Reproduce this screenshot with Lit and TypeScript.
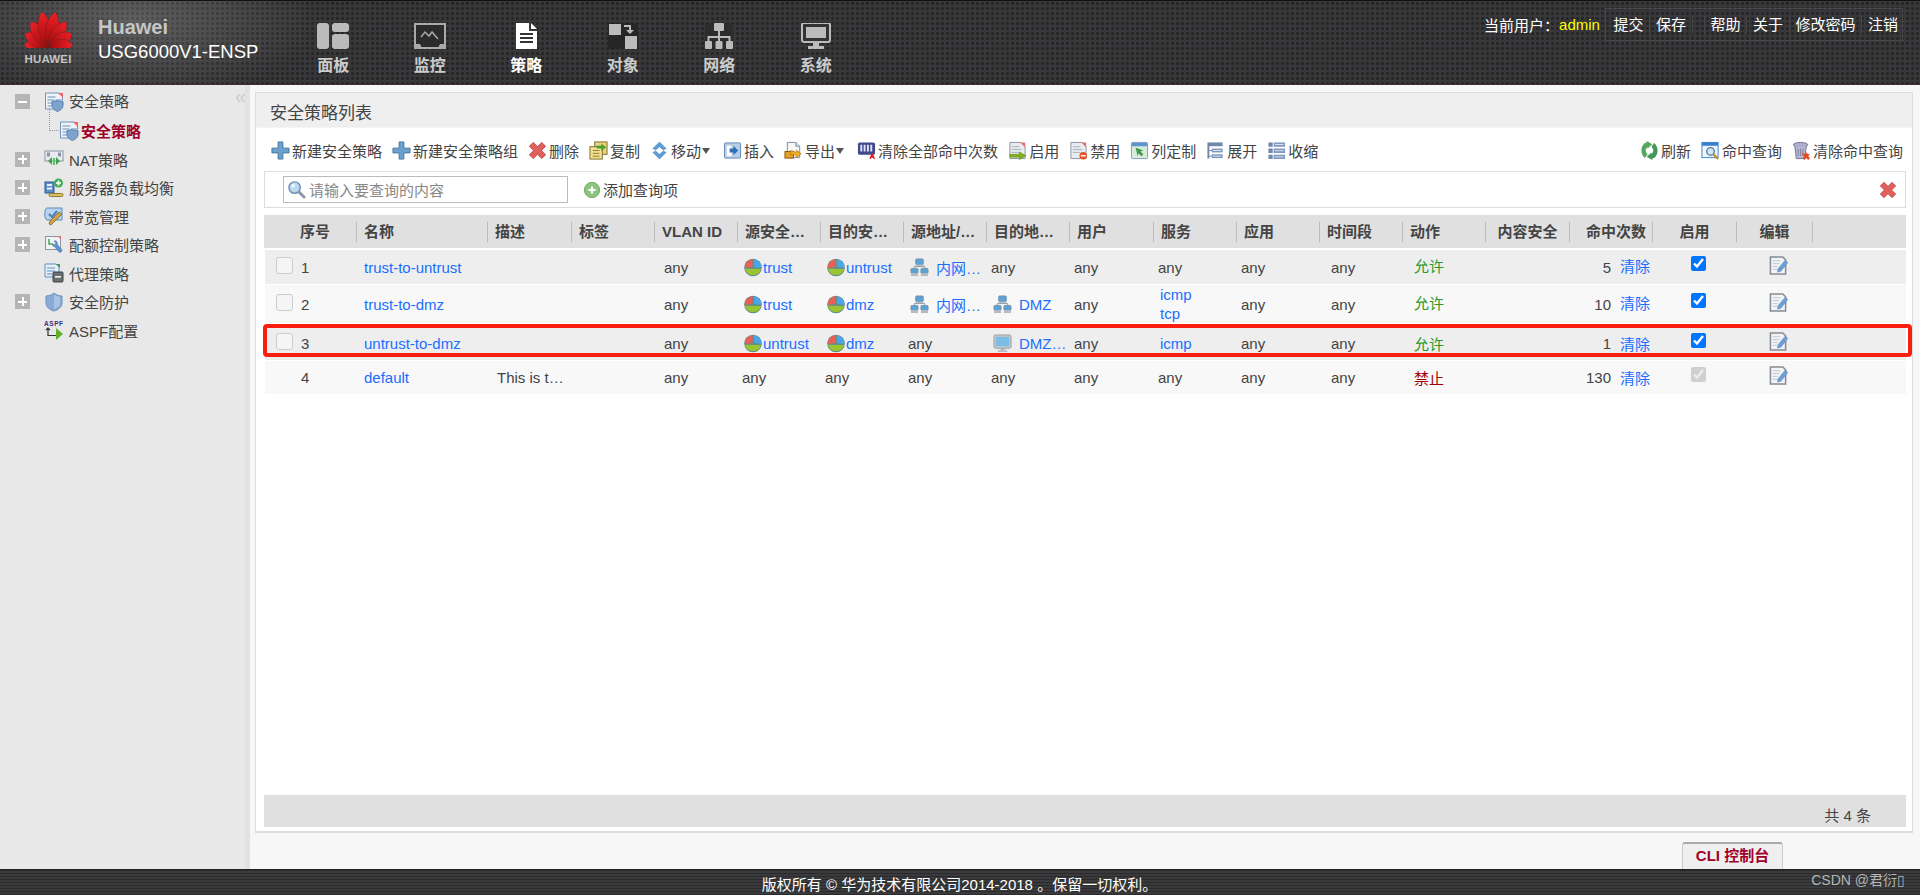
import { LitElement, html, css, svg, TemplateResult } from "lit";
import { customElement } from "lit/decorators.js";

const ic = (body: unknown, cls = "ic") => html`<svg class=${cls} viewBox="0 0 20 20">${body}</svg>`;

const plus = ic(svg`<path d="M7.500 1h5v6.500H19v5h-6.500V19h-5v-6.500H1v-5h6.500z" fill="#6ba0cf" stroke="#45769f"/>`);
const redX = ic(svg`<path d="M1.500 5.500l4-4L10 6l4.500-4.500 4 4L14 10l4.500 4.500-4 4L10 14l-4.500 4.500-4-4L6 10z" fill="#e2605c" stroke="#c04a48"/>`);
const copy = ic(svg`<rect x="6" y="1" width="13" height="13" fill="#e9d27a" stroke="#7b6a2a"/><rect x="1" y="6" width="13" height="13" fill="#f3e08f" stroke="#7b6a2a"/><path d="M4 10h7M4 13h7M4 16h7" stroke="#8a7a3a"/><path d="M8 5h5V2.500l5 4-5 4V8H8z" fill="#49a030"/>`);
const move = ic(svg`<path d="M10 1l7 7-3 1.500-4-3.500-4 3.500L3 8z" fill="#5d9bd6" stroke="#4a86c0" stroke-width=".5"/><path d="M10 19l7-7-3-1.500-4 3.500-4-3.500L3 12z" fill="#5d9bd6" stroke="#4a86c0" stroke-width=".5"/>`);
const insert = ic(svg`<rect x="1.500" y="2" width="17" height="16" rx="1" fill="#b8cde6" stroke="#5f86b8"/><rect x="4" y="5" width="5" height="11" fill="#fff"/><path d="M7 8h4V5l5 5-5 5v-3H7z" fill="#2f6fb5"/>`);
const exportI = ic(svg`<path d="M3.500 1.500h9l4 4v12h-13z" fill="#f7f7f7" stroke="#7a88a8"/><path d="M12.500 1.500v4h4" fill="#dde" stroke="#7a88a8"/><rect x="1" y="11" width="9" height="7" fill="#e8a020" stroke="#8a5a10"/><path d="M7 10l6 2v-2.500l5 4-5 4V15l-6-1z" fill="#f0b020" stroke="#a06c10" stroke-width=".6"/>`);
const clearAll = ic(svg`<rect x="1" y="1.500" width="18" height="13" rx="2" fill="#3f4a8a"/><path d="M4.500 4v7M8 4v7M11.500 4v7M15 4v7" stroke="#dfe3f5" stroke-width="2"/><path d="M13 19l2.500-6h1l2.500 6h-1.500l-.5-1.500h-2l-.5 1.500z" fill="#e01818"/>`);
const doc = svg`<path d="M2 1.500h12l4 4v13H2z" fill="#e8ecf0" stroke="#8892a0"/><path d="M13 1.500l5 5v-5z" fill="#e66"/><path d="M4 6h8M4 9h10M4 12h8" stroke="#a8b0b8"/>`;
const enable = ic(svg`${doc}<path d="M2 14h10v-2.500l7 4-7 4V17H2z" fill="#82b020" stroke="#5a8010" stroke-width=".5"/>`);
const disable = ic(svg`${doc}<circle cx="15" cy="15.500" r="4" fill="#e8502a"/><rect x="12.500" y="14.700" width="5" height="1.600" fill="#fff"/>`);
const cols = ic(svg`<rect x="1.500" y="1.500" width="17" height="17" rx="1" fill="#d8ead8" stroke="#7f9cc0"/><rect x="2" y="2" width="16" height="3.500" fill="#5f93d0"/><path d="M6 7l8 3-3 1 3 3-2 2-3-3-1 3z" fill="#3a9a4a"/>`);
const expand = ic(svg`<rect x="1.500" y="1.500" width="16" height="4" fill="#6f86ad"/><path d="M2.500 5v13.500" stroke="#6f86ad" stroke-width="2"/><path d="M3 10h3M3 16h3" stroke="#6f86ad"/><rect x="6" y="8" width="11.500" height="4" fill="#7f96bd"/><rect x="6" y="14" width="11.500" height="4" fill="#7f96bd"/><path d="M7.500 10h8.500M7.500 16h8.500" stroke="#dde4f0"/>`);
const collapse = ic(svg`<path d="M1.500 1.500h4.500v4.500H1.500zM1.500 8h4.500v4.500H1.500zM1.500 14.500h4.500V19H1.500z" fill="#6f86ad"/><path d="M7 1.500h12v4.500H7zM7 8h12v4.500H7zM7 14.500h12V19H7z" fill="#8298bf"/><path d="M8.500 3.700h9M8.500 10.200h9M8.500 16.700h9" stroke="#dde4f0"/>`);
const refresh = ic(svg`<path d="M9.500 1C4 1 1.500 5.500 1.500 10c0 3.500 1.500 6 3.500 8l3-4c-1-1-2-2.500-2-4 0-2 1.500-4 3.500-4z" fill="#55a85f"/><path d="M7 0l6 3.500L8 8z" fill="#55a85f"/><path d="M10.500 19c5.500 0 8-4.500 8-9 0-3.500-1.500-6-3.500-8l-3 4c1 1 2 2.500 2 4 0 2-1.500 4-3.500 4z" fill="#46985a"/><path d="M13 20l-6-3.500 5-4.500z" fill="#46985a"/>`);
const hitQ = ic(svg`<rect x="1" y="1.500" width="17" height="16" fill="#eef5fb" stroke="#3a7fd0"/><rect x="1" y="1.500" width="17" height="3.500" fill="#3a7fd0"/><circle cx="10" cy="11" r="4" fill="#cfe6f7" stroke="#5a7a98" stroke-width="1.400"/><path d="M13 14l5 5" stroke="#c08a20" stroke-width="2.200"/>`);
const trash = ic(svg`<ellipse cx="9" cy="4" rx="7.500" ry="2.500" fill="#aeb0d0" stroke="#70708f"/><path d="M3 5.500l1.500 13h9L15 5.500" fill="#b8b9d2" stroke="#70708f"/><path d="M6.500 8v8M9 8v8M11.500 8v8" stroke="#7f7f9f"/><path d="M11 12l2 2 2-2 2 2 2-.2-2 2.200 2 2-2 2-2-2-2 2-2-2 2-2-2-2z" fill="#e8481e"/>`);
const search = ic(svg`<circle cx="8" cy="8" r="6" fill="#bcd9f2" stroke="#6a8fb5" stroke-width="1.500"/><circle cx="6.500" cy="6" r="2" fill="#eef7ff"/><path d="M12.500 12.500l5.500 5.500" stroke="#8a97a8" stroke-width="3" stroke-linecap="round"/>`);
const addI = ic(svg`<circle cx="10" cy="10" r="8.500" fill="#8cc47e" stroke="#6fa860"/><path d="M6 10h8M10 6v8" stroke="#fff" stroke-width="2.400"/>`);
const pie = ic(svg`<circle cx="9.500" cy="10" r="9.300" fill="#5f8f8a"/><path d="M9 9.500V1.200A8.800 8.800 0 0 0 .800 10.500z" fill="#ea5f58"/><path d="M10.500 9.500V1.200A8.800 8.800 0 0 1 18.300 10.500z" fill="#4aa6e6"/><path d="M1 11.200L18 11.500A8.800 8.800 0 0 1 1 11.200z" fill="#9ac530"/>`);
const addr = ic(svg`<rect x="6" y="1" width="8" height="6" rx="1" fill="#5aa3d8" stroke="#7d93a8"/><rect x="1" y="11" width="7.500" height="5" rx="1" fill="#5aa3d8" stroke="#7d93a8"/><rect x="11.500" y="11" width="7.500" height="5" rx="1" fill="#5aa3d8" stroke="#7d93a8"/><path d="M10 7v2M4.500 11V9h11v2" stroke="#8a9aa8" fill="none"/><rect x="1" y="16" width="7.500" height="3" fill="#b5bcc4"/><rect x="11.500" y="16" width="7.500" height="3" fill="#b5bcc4"/><rect x="6" y="7" width="8" height="1.500" fill="#b5bcc4"/>`);
const mon = ic(svg`<rect x="1" y="1" width="18" height="14" rx="1.500" fill="#c4c8cc" stroke="#9aa0a6"/><rect x="3" y="3" width="14" height="10" fill="#7cbde6"/><rect x="8" y="15" width="4" height="2" fill="#aab0b6"/><rect x="5" y="17" width="10" height="2" fill="#b8bec4"/>`);
const edit = ic(svg`<path d="M1.500 1h13l3 3v15h-16z" fill="#f2f3f4" stroke="#868c94" stroke-width="1.600"/><path d="M4 5h8M4 8h7M4 11h5M4 14h5" stroke="#c2c6ca"/><path d="M9.500 13.500L17 4.500l2.800 2.300L12.500 16l-3.500 1z" fill="#6f9fd8" stroke="#4f7fb8" stroke-width=".5"/>`);

const shieldDoc = svg`<path d="M1.500 1h14l3 3v4H12v9H1.500z" fill="#eef2f6" stroke="#6f92bd"/><path d="M14 1l5 5V1z" fill="#e66"/><path d="M3.500 5h8M3.500 8h7M3.500 11h6M3.500 14h6" stroke="#6f92bd"/><path d="M8 9.500c3 0 5-1 5-1s2 1 6 1v4c0 3-3 5-5.500 6C11 18.500 8 16.500 8 13.500z" fill="#7fa2cf" stroke="#5a7fae"/>`;
const tree: Record<string, TemplateResult> = {
  policy: ic(shieldDoc),
  nat: ic(svg`<rect x="1" y="2" width="18" height="10" fill="#e8ebef" stroke="#8a95a3"/><rect x="3" y="3.500" width="3" height="4" fill="#8a95a3"/><rect x="14" y="3.500" width="3" height="4" fill="#8a95a3"/><path d="M8 8l-4 4 4 4zM12 8l4 4-4 4z" fill="#3fa24f"/><path d="M9 9h2v7H9z" fill="#5fbf6a"/>`),
  server: ic(svg`<rect x="1" y="4" width="9" height="11" fill="#5a8fc8" stroke="#33598a"/><rect x="3" y="6" width="5" height="2" fill="#e8f0f8"/><rect x="3" y="9.500" width="5" height="2" fill="#e8f0f8"/><circle cx="14.500" cy="5" r="4.500" fill="#43ad5a"/><path d="M12 5h5M14.500 2.500v5" stroke="#fff" stroke-width="1.600"/><rect x="5" y="15.500" width="14" height="3" rx="1.500" fill="#d9c16a" stroke="#8f7a2a"/>`),
  band: ic(svg`<path d="M3 2h15v12H3C0 14 0 2 3 2z" fill="#b7d3ee" stroke="#5c8bbd"/><path d="M5 8l3 3 5-6" stroke="#4a7fb5" stroke-width="2" fill="none"/><path d="M15 6l3 2-8 8-3 3-2-1 1-3z" fill="#d9a23a" stroke="#444" stroke-width=".6"/>`),
  quota: ic(svg`<rect x="1.500" y="1.500" width="15" height="13" fill="#f2f3f5" stroke="#8d95a0"/><path d="M14 1.500l3 3v-3z" fill="#e66"/><path d="M5 4v5h4" stroke="#4aa35a" stroke-width="1.500" fill="none"/><path d="M10 11l5 6a2 2 0 0 0 3-2l-5-6c1-2-1-4-3-3l2 2-1 2-2-1c-1 2 1 3 1 2z" fill="#5b93cc" stroke="#3d6ea3" stroke-width=".5"/>`),
  proxy: ic(svg`<path d="M1 1h11l3 3v10H1z" fill="#e8f0f6" stroke="#5b8fc0"/><path d="M12 1l4 4V1z" fill="#4a9a50"/><path d="M3 5h8M3 8h8M3 11h5" stroke="#5b8fc0"/><rect x="9" y="9" width="10" height="10" rx="1" fill="#6a6f74" stroke="#3f4347"/><rect x="11" y="13" width="6" height="1.600" fill="#f2f2f2"/>`),
  shield: ic(svg`<path d="M2 4c3 0 6-1 8-3 2 2 5 3 8 3v7c0 4-4 7-8 8-4-1-8-4-8-8z" fill="#8aabd6" stroke="#6a8fbf"/><path d="M10 3v14c3-1 6-3 6-6V5z" fill="#a9c3e5"/>`),
  aspf: ic(svg`<text x="0" y="6" font-size="6.500" font-weight="700" fill="#3d2f78" font-family="Liberation Sans" textLength="19">ASPF</text><path d="M4 7.500v8h8M2 10l2-2 2 2" stroke="#333" stroke-width="1.200" fill="none"/><path d="M12 8l7 6-7 6z" fill="#5fae2c"/>`),
};

const petals = [[-85, 25], [-60, 28], [-35, 32], [-11, 37], [11, 37], [35, 32], [60, 28], [85, 25]];
const logo = html`<svg class="logo" viewBox="-26 -38 52 39">
  <defs><linearGradient id="pet" x1="0" y1="0" x2="0" y2="1"><stop offset="0" stop-color="#f02028"/><stop offset="1" stop-color="#9c0a0c"/></linearGradient></defs>
  ${petals.map(([a, l]) => svg`<path transform="rotate(${a})" d="M0 0C-8.500 ${-l * 0.3} -9.500 ${-l * 0.72} 0 ${-l}C9.500 ${-l * 0.72} 8.500 ${-l * 0.3} 0 0z" fill="url(#pet)" stroke="#4a2a2a" stroke-width=".4"/>`)}
</svg>`;

const navIcons: TemplateResult[] = [
  html`<svg class="nav-ic" viewBox="0 0 34 26"><rect x="1" y="0" width="12" height="26" rx="3" fill="#bbb"/><rect x="16" y="0" width="17" height="9" rx="3" fill="#bbb"/><rect x="16" y="11" width="17" height="15" rx="3" fill="#bbb"/></svg>`,
  html`<svg class="nav-ic" viewBox="0 0 34 26"><rect x="2" y="1" width="30" height="24" fill="#2b2b2b" stroke="#aaa" stroke-width="2"/><path d="M8 14l4-5 4 4 3-4 6 7" stroke="#aaa" stroke-width="1.500" fill="none"/><path d="M3 25v-4h4l2 4zM31 25v-4h-4l-2 4z" fill="#aaa"/></svg>`,
  html`<svg class="nav-ic" viewBox="0 0 34 26"><path d="M7 0h13v8h8v18H7z" fill="#fff"/><path d="M22 0l6 6h-6z" fill="#fff"/><path d="M11 11h13M11 15h13M11 19h13" stroke="#333" stroke-width="2"/></svg>`,
  html`<svg class="nav-ic" viewBox="0 0 34 26"><rect x="2" y="0" width="30" height="26" fill="#262626"/><rect x="3" y="1" width="12" height="11" fill="#bbb"/><rect x="19" y="13" width="12" height="13" fill="#bbb"/><path d="M18 2h7v5h3l-4 4-4-4h3V4h-5z" fill="#bbb"/></svg>`,
  html`<svg class="nav-ic" viewBox="0 0 34 26"><rect x="3" y="0" width="28" height="26" fill="#2c2c2c"/><rect x="12" y="0" width="10" height="8" rx="1" fill="#bbb"/><path d="M17 8v6M6.500 18v-4h21v4M17 14v4" stroke="#bbb" stroke-width="2" fill="none"/><rect x="3" y="18" width="7" height="8" rx="1" fill="#bbb"/><rect x="13.500" y="18" width="7" height="8" rx="1" fill="#bbb"/><rect x="24" y="18" width="7" height="8" rx="1" fill="#bbb"/></svg>`,
  html`<svg class="nav-ic" viewBox="0 0 34 26"><rect x="3" y="0" width="28" height="19" rx="2" fill="#333" stroke="#bbb" stroke-width="2"/><rect x="7" y="4" width="20" height="11" fill="#bbb"/><rect x="14" y="20" width="6" height="3" fill="#bbb"/><rect x="9" y="23" width="16" height="3" fill="#bbb"/></svg>`,
];
const navs = ["面板", "监控", "策略", "对象", "网络", "系统"];

const leftTools: [TemplateResult, string, boolean?][] = [
  [plus, "新建安全策略"], [plus, "新建安全策略组"], [redX, "删除"], [copy, "复制"], [move, "移动", true],
  [insert, "插入"], [exportI, "导出", true], [clearAll, "清除全部命中次数"], [enable, "启用"], [disable, "禁用"],
  [cols, "列定制"], [expand, "展开"], [collapse, "收缩"],
];
const rightTools: [TemplateResult, string][] = [[refresh, "刷新"], [hitQ, "命中查询"], [trash, "清除命中查询"]];

const heads: [string, string?][] = [
  ["序号", "seq"], ["名称"], ["描述"], ["标签"], ["VLAN ID"], ["源安全…"], ["目的安…"], ["源地址/…"], ["目的地…"],
  ["用户"], ["服务"], ["应用"], ["时间段"], ["动作"], ["内容安全", "ctr"], ["命中次数", "rgt"], ["启用", "ctr"], ["编辑", "ctr"], ["", "last"],
];

interface Row { n: string; name: string; desc: string; src: string; dst: string; sa?: string; da?: string; daMon?: boolean; svc: string[]; act: string; hits: string; off?: boolean; }
const rows: Row[] = [
  { n: "1", name: "trust-to-untrust", desc: "", src: "trust", dst: "untrust", sa: "内网…", svc: [], act: "允许", hits: "5" },
  { n: "2", name: "trust-to-dmz", desc: "", src: "trust", dst: "dmz", sa: "内网…", da: "DMZ", svc: ["icmp", "tcp"], act: "允许", hits: "10" },
  { n: "3", name: "untrust-to-dmz", desc: "", src: "untrust", dst: "dmz", da: "DMZ…", daMon: true, svc: ["icmp"], act: "允许", hits: "1" },
  { n: "4", name: "default", desc: "This is t…", src: "", dst: "", svc: [], act: "禁止", hits: "130", off: true },
];

const sideItems: [string, string, string][] = [
  ["plus", "nat", "NAT策略"], ["plus", "server", "服务器负载均衡"], ["plus", "band", "带宽管理"], ["plus", "quota", "配额控制策略"],
  ["none", "proxy", "代理策略"], ["plus", "shield", "安全防护"], ["none", "aspf", "ASPF配置"],
];

@customElement("app-root")
export class AppRoot extends LitElement {
  static styles = css`
    :host { display: block; font-family: "Liberation Sans", "Noto Sans CJK SC", sans-serif; font-size: 15px; color: #444; }
    * { box-sizing: border-box; }
    .page { height: 895px; display: flex; flex-direction: column; background: #f7f7f7; overflow: hidden; }
    .tex { background-color: #38383a; background-image: radial-gradient(circle at 2.500px 2.500px, #252526 1.200px, transparent 1.700px); background-size: 5px 5px; }
    header { height: 85px; flex: none; display: flex; position: relative; border-top: 1px solid #111; border-bottom: 1px solid #4a2a2a; color: #fff; }
    header::before { content: ""; position: absolute; inset: 0 auto 0 0; width: 320px; background: radial-gradient(ellipse 190px 80px at 130px 20px, rgba(255,255,255,.2), transparent); pointer-events: none; }
    .brand { width: 285px; flex: none; display: flex; padding-left: 22px; position: relative; }
    .logo-col { width: 52px; display: flex; flex-direction: column; align-items: center; padding-top: 9px; }
    .logo { width: 51px; height: 38px; display: block; }
    .hw { font-size: 11.500px; font-weight: 700; color: #c4c4c4; margin-top: 4px; line-height: 14px; letter-spacing: .2px; }
    .names { margin-left: 24px; padding-top: 14px; white-space: nowrap; }
    .hname { font-size: 20px; font-weight: 700; color: #c6c6c6; line-height: 24px; }
    .model { font-size: 18.500px; line-height: 24px; margin-top: 1px; }
    nav { display: flex; position: relative; }
    .nav { width: 96.500px; display: flex; flex-direction: column; align-items: center; padding-top: 22px; font-size: 16px; font-weight: 700; color: #ccc; line-height: 22px; }
    .nav.on { color: #fff; }
    .nav-ic { width: 34px; height: 26px; margin-bottom: 6px; }
    .top { margin-left: auto; margin-right: 17px; margin-top: 7px; align-self: flex-start; display: flex; align-items: center; height: 33px; white-space: nowrap; }
    .admin { color: #ff0; margin-right: 5px; }
    .links { display: flex; height: 33px; align-items: center; border: 1px solid #48484a; padding-left: 2px; }
    .links span { padding: 0 6px 0 5.500px; border-right: 1px solid #454547; line-height: 18px; min-height: 18px; }
    .links span:last-child { border: 0; padding-right: 4px; }
    .links .blank { width: 12px; padding: 0; }
    main { flex: 1; min-height: 0; display: flex; }
    aside { width: 250px; flex: none; background: #e8e8e8; border-right: 5px solid #e2e2e2; padding-top: 2px; position: relative; }
    .collapse { position: absolute; right: -4px; top: 1px; width: 14px; color: #ccc; font-size: 20px; line-height: 20px; }
    .node { display: flex; align-items: center; height: 28.500px; padding-left: 15px; color: #444; font-size: 15px; white-space: nowrap; }
    .node.first { height: 29.500px; }
    .first .lab { margin-bottom: 3px; }
    .box { width: 15px; height: 15px; background: #b5b5b5; position: relative; flex: none; margin-right: 14px; }
    .box::before { content: ""; position: absolute; left: 3px; right: 3px; top: 6.500px; height: 2px; background: #fff; }
    .box.plus::after { content: ""; position: absolute; top: 3px; bottom: 3px; left: 6.500px; width: 2px; background: #fff; }
    .box.none { background: none; }
    .box.none::before { display: none; }
    .node .ic { width: 20px; height: 20px; margin-right: 5px; flex: none; }
    .child { padding-left: 49px; }
    .conn { width: 10px; height: 23px; margin-top: -22px; border-left: 1px dotted #999; border-bottom: 1px dotted #999; flex: none; }
    .child .ic { margin-right: 2px; }
    .child b { color: #a00028; font-weight: 700; }
    .content { flex: 1; min-width: 0; display: flex; flex-direction: column; padding: 7px 7px 0 5px; }
    .panel { flex: 1; display: flex; flex-direction: column; background: #fff; border: 1px solid #ddd; border-bottom-width: 2px; padding-bottom: 4px; }
    .title { height: 35px; flex: none; background: #efefef; border-bottom: 1px solid #f5f5f5; color: #444; font-size: 17px; line-height: 42px; padding-left: 14px; overflow: hidden; }
    .tools { height: 43px; flex: none; display: flex; align-items: center; padding: 2px 9px 0 15px; gap: 10px; white-space: nowrap; }
    .tool { display: flex; align-items: center; gap: 2px; }
    .tool .ic { width: 19px; height: 19px; flex: none; }
    .tool.drop { margin-right: 3px; }
    .caret { width: 0; height: 0; border: 4.500px solid transparent; border-top: 6px solid #555; border-bottom: 0; margin-left: -1px; }
    .gap { flex: 1; }
    .query { height: 37px; flex: none; margin: 0 6px 0 8px; border: 1px solid #ddd; display: flex; align-items: center; padding: 0 8px 0 18px; }
    .input { width: 285px; height: 27px; border: 1px solid #bbb; display: flex; align-items: center; padding-left: 3px; gap: 3px; color: #888; font-size: 15px; }
    .input .ic { width: 19px; height: 19px; }
    .add { display: flex; align-items: center; margin-left: 15px; gap: 2px; }
    .add .ic { width: 18px; height: 18px; }
    .close { margin-left: auto; width: 18px; height: 18px; display: block; }
    .close .ic { width: 18px; height: 18px; display: block; }
    .table { margin: 7px 6px 0 8px; flex: none; }
    .thead, .row { display: grid; grid-template-columns: 93px 131px 84px 83px 83px 83px 83px 83px 83px 84px 83px 83px 83px 83px 84px 83px 84px 76px 1fr; align-items: center; }
    .thead { height: 33px; background: #e0e0e0; margin-bottom: 2px; font-weight: 700; }
    .th { height: 20px; line-height: 20px; padding-left: 7px; border-right: 1px solid #bbb; white-space: nowrap; overflow: hidden; }
    .th.seq { padding-left: 36px; }
    .th.ctr { padding-left: 0; text-align: center; }
    .th.rgt { padding: 0 6px 0 0; text-align: right; }
    .th.last { border: 0; }
    .row { margin-left: 1px; margin-bottom: 1px; position: relative; white-space: nowrap; }
    .row .cell:first-child { margin-left: -1px; }
    .r1 { height: 34px; background: #eee; }
    .r2 { height: 38px; background: #f8f8f8; }
    .r3 { height: 36px; background: #eee; padding-top: 3px; }
    .r4 { height: 33px; background: #f8f8f8; }
    .r3::after { content: ""; box-sizing: border-box; position: absolute; left: -2px; right: -6px; top: 0; height: 33px; border: 4px solid #fa1e10; border-radius: 4px; pointer-events: none; }
    .cell { display: flex; align-items: center; min-width: 0; overflow: visible; }
    .seqc { padding-left: 12px; gap: 8px; }
    .ck { width: 17px; height: 17px; background: #f5f5f5; border: 1px solid #ccc; border-radius: 3px; margin-bottom: 4px; flex: none; }
    .ck.hid { visibility: hidden; }
    .p3 { padding-left: 3px; } .p4 { padding-left: 4px; } .p5 { padding-left: 5px; } .p6 { padding-left: 6px; } .p8 { padding-left: 8px; } .p10 { padding-left: 10px; }
    a { color: #1a6eff; text-decoration: none; }
    .cell .ic { width: 19px; height: 19px; flex: none; }
    .ad { gap: 7px; }
    .svc { flex-direction: column; align-items: flex-start; line-height: 19px; }
    .ok { color: #2a9a2a; } .no { color: #a00000; }
    .r1 .ok, .r1 .hits a, .r2 .ok, .r2 .hits a { margin-bottom: 3px; }
    .hits { justify-content: flex-end; gap: 9px; padding-right: 4px; }
    .en { justify-content: center; padding-left: 4px; }
    .en input { width: 15px; height: 15px; margin: 0 0 7px; }
    .ed { justify-content: center; padding-left: 5px; }
    .ed .ic { margin-bottom: 4px; }
    .fill { flex: 1; }
    .pager { height: 32px; flex: none; margin: 0 6px 0 8px; background: #e0e0e0; display: flex; align-items: center; justify-content: flex-end; padding-right: 35px; padding-top: 6px; }
    .tabs { height: 36px; flex: none; display: flex; justify-content: flex-end; align-items: flex-end; padding-right: 130px; }
    .tab { width: 101px; height: 27px; background: #efefef; border: 1px solid #ccc; border-top: 2px solid #aaa; border-bottom: 0; border-radius: 3px 3px 0 0; text-align: center; color: #a00028; font-weight: 700; line-height: 24px; }
    footer { height: 26px; flex: none; position: relative; color: #fff; text-align: center; line-height: 29px; padding-right: 1px; background-color: #38383a; background-image: repeating-linear-gradient(0deg, #2b2b2c 0 1px, #3a3a3c 1px 3px); border-top: 1px solid #222; }
    .wm { position: absolute; right: 15px; top: -1px; font-size: 14px; line-height: 22px; color: #b5b5b5; }
  `;

  private row(r: Row, i: number) {
    const any = (p: string) => html`<div class="cell ${p}">any</div>`;
    return html`<div class="row r${i + 1}">
      <div class="cell seqc"><span class="ck ${r.off ? "hid" : ""}"></span><span>${r.n}</span></div>
      <div class="cell p6"><a>${r.name}</a></div>
      <div class="cell p8">${r.desc}</div>
      <div class="cell"></div>
      ${any("p8")}
      ${r.src ? html`<div class="cell p5">${pie}<a>${r.src}</a></div>` : any("p3")}
      ${r.dst ? html`<div class="cell p5">${pie}<a>${r.dst}</a></div>` : any("p3")}
      ${r.sa ? html`<div class="cell p5 ad">${addr}<a>${r.sa}</a></div>` : any("p3")}
      ${r.da ? html`<div class="cell p5 ad">${r.daMon ? mon : addr}<a>${r.da}</a></div>` : any("p3")}
      ${any("p3")}
      ${r.svc.length ? html`<div class="cell svc p5">${r.svc.map((s) => html`<a>${s}</a>`)}</div>` : any("p3")}
      ${any("p3")}
      ${any("p10")}
      <div class="cell p10"><span class=${r.act === "允许" ? "ok" : "no"}>${r.act}</span></div>
      <div class="cell"></div>
      <div class="cell hits"><span>${r.hits}</span><a>清除</a></div>
      <div class="cell en"><input type="checkbox" .checked=${true} ?disabled=${!!r.off} /></div>
      <div class="cell ed">${edit}</div>
      <div class="cell"></div>
    </div>`;
  }

  render() {
    return html`<div class="page">
      <header class="tex">
        <div class="brand">
          <div class="logo-col">${logo}<div class="hw">HUAWEI</div></div>
          <div class="names"><div class="hname">Huawei</div><div class="model">USG6000V1-ENSP</div></div>
        </div>
        <nav>${navs.map((n, i) => html`<div class="nav ${i === 2 ? "on" : ""}">${navIcons[i]}<span>${n}</span></div>`)}</nav>
        <div class="top">当前用户：<span class="admin">admin</span>
          <div class="links"><span>提交</span><span>保存</span><span class="blank"></span><span>帮助</span><span>关于</span><span>修改密码</span><span>注销</span></div>
        </div>
      </header>
      <main>
        <aside>
          <div class="collapse">«</div>
          <div class="node first"><span class="box"></span>${tree.policy}<span class="lab">安全策略</span></div>
          <div class="node child"><span class="conn"></span>${tree.policy}<b>安全策略</b></div>
          ${sideItems.map(([b, k, t]) => html`<div class="node"><span class="box ${b}"></span>${tree[k]}${t}</div>`)}
        </aside>
        <div class="content">
          <section class="panel">
            <div class="title">安全策略列表</div>
            <div class="tools">
              ${leftTools.map(([ico, t, d]) => html`<div class="tool ${d ? "drop" : ""}">${ico}<span>${t}</span>${d ? html`<i class="caret"></i>` : ""}</div>`)}
              <div class="gap"></div>
              ${rightTools.map(([ico, t]) => html`<div class="tool">${ico}<span>${t}</span></div>`)}
            </div>
            <div class="query">
              <div class="input">${search}<span>请输入要查询的内容</span></div>
              <div class="add">${addI}<span>添加查询项</span></div>
              <div class="close">${redX}</div>
            </div>
            <div class="table">
              <div class="thead">${heads.map(([t, c]) => html`<div class="th ${c ?? ""}">${t}</div>`)}</div>
              ${rows.map((r, i) => this.row(r, i))}
            </div>
            <div class="fill"></div>
            <div class="pager">共 4 条</div>
          </section>
          <div class="tabs"><div class="tab">CLI 控制台</div></div>
        </div>
      </main>
      <footer><span>版权所有 © 华为技术有限公司2014-2018 。保留一切权利。</span><span class="wm">CSDN @君衍▯</span></footer>
    </div>`;
  }
}
